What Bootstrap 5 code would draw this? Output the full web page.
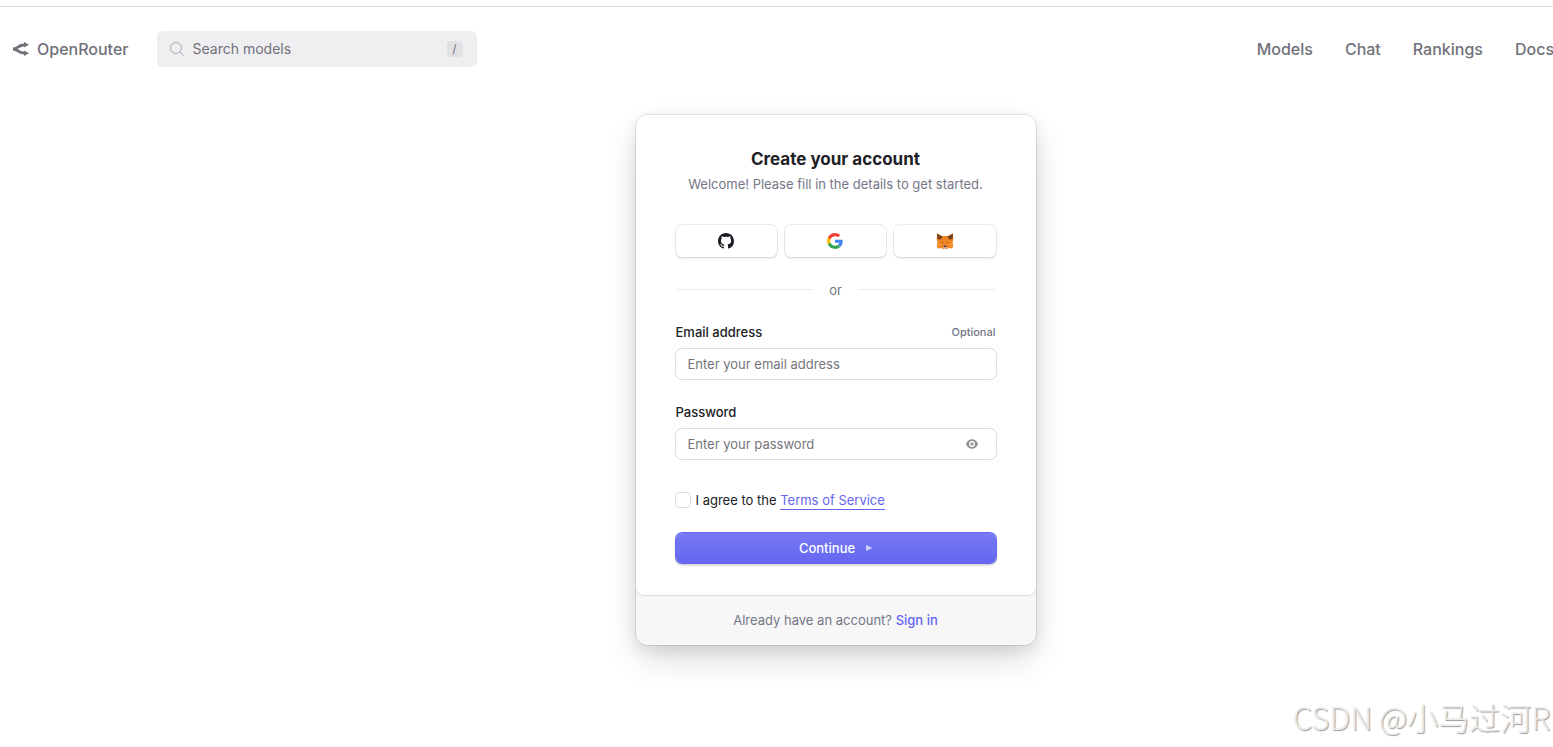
<!DOCTYPE html>
<html lang="en">
<head>
<meta charset="utf-8">
<meta name="viewport" content="width=device-width, initial-scale=1">
<title>OpenRouter - Create your account</title>
<link href="https://cdn.jsdelivr.net/npm/bootstrap@5.3.0/dist/css/bootstrap.min.css" rel="stylesheet">
<style>
  body { font-family: Inter, "Noto Sans CJK SC", sans-serif; background: #fff; color: #212126; font-size: 13px; line-height: 18px; }
  .page { min-height: 100vh; overflow: hidden; padding-top: 6px; }
  .site-header { border-top: 1px solid #dfdfe3; height: 85px; padding-left: 12px; }
  .brand, .site-nav a { color: #71717a; font-size: 16px; line-height: 24px; font-weight: 500; text-decoration: none; }
  .brand { gap: 7px; }
  .site-nav { gap: 32px; margin-right: -1px; }
  .search { width: 320px; height: 36px; margin-left: 28px; padding: 0 14px 0 12px; gap: 8px; background: #efeff1; border-radius: 6px; }
  .search input { min-width: 0; font-size: 14px; line-height: 20px; color: #71717a; outline: 0; }
  .search input::placeholder { color: #71717a; opacity: 1; }
  .search kbd { width: 16px; height: 16px; padding: 0; border-radius: 4px; background: #e2e2e5; color: #71717a; font: 12px/16px Inter, sans-serif; text-align: center; }
  .content { padding: 24px 0 40px 118px; }
  .signup { width: 400px; border-radius: 12px; background: #f7f7f7; box-shadow: 0 0 0 1px rgba(0,0,0,.09), 0 5px 15px rgba(0,0,0,.08), 0 15px 35px -5px rgba(25,28,33,.2); }
  .signup-body { padding: 32px 40px; background: #fff; border-radius: 12px 12px 8px 8px; box-shadow: 0 1px 1px rgba(0,0,0,.12); }
  .signup h1 { font-size: 17px; line-height: 24px; font-weight: 700; margin-bottom: 4px; }
  .muted { color: #747686; }
  .providers { display: grid; grid-template-columns: repeat(3, 1fr); gap: 8px; margin: 32px 0 24px; }
  .provider { height: 32px; border: 0; border-radius: 6px; background: #fff; box-shadow: 0 0 0 1px rgba(0,0,0,.08), 0 2px 2px rgba(0,0,0,.08); }
  .divider { gap: 16px; margin-bottom: 24px; }
  .divider hr { height: 1px; border: 0; background: #ebebed; opacity: 1; margin: 0 0 2px; }
  .field { margin-bottom: 24px; }
  .field label { font-weight: 500; }
  .field-box { height: 30px; margin-top: 8px; padding: 0 12px; border-radius: 6px; box-shadow: 0 0 0 1px #dedede; }
  .field-box input { min-width: 0; font-size: 13px; outline: 0; }
  .field-box input::placeholder { color: #75757c; opacity: 1; }
  .optional { font-size: 11px; font-weight: 500; }
  .reveal { width: 24px; height: 24px; }
  .terms { margin: 32px 0 24px; gap: 5px; }
  .terms input { appearance: none; width: 16px; height: 16px; margin: 0 0 0 -1px; border: 1px solid #dcdcde; border-radius: 4px; background: #fff; }
  .terms input:checked { background: #6466f1; }
  .accent { color: #6466f1; text-decoration: none; }
  .terms .accent { border-bottom: 1px solid #6466f1; padding-bottom: 1px; }
  .continue { height: 30px; border: 0; border-radius: 6px; color: #fff; font-weight: 500; background: linear-gradient(#7779f4, #6466f1); box-shadow: 0 0 0 1px #6668f2, 0 2px 3px rgba(0,0,0,.25); gap: 11px; }
  .signup-foot { padding: 16px; }
  .watermark { right: 3px; bottom: 8px; font-family: "Noto Sans CJK SC", sans-serif; font-size: 31px; line-height: 44px; font-weight: 300; color: #ececec; text-shadow: 1px 1px 1px #999; pointer-events: none; }
</style>
</head>
<body>
<div class="page position-relative">
  <header class="site-header d-flex align-items-center">
    <a class="brand d-flex align-items-center" href="#">
      <svg width="18" height="18" viewBox="0 0 18 18" fill="none" stroke="#71717a" stroke-width="3" aria-hidden="true">
        <path d="M1 9c5 0 5-4 11-4h1M1 9c5 0 5 4 11 4h1"/>
        <path d="M12 2l5 2.800-5 2.800zM12 10.400l5 2.800-5 2.800z" fill="#71717a" stroke="none"/>
      </svg>
      <span>OpenRouter</span>
    </a>
    <label class="search d-flex align-items-center">
      <svg width="16" height="16" viewBox="0 0 16 16" fill="none" stroke="#a9a9b0" stroke-linecap="round" aria-hidden="true"><circle cx="7" cy="7" r="5.500"/><path d="M11 11l3.500 3.500"/></svg>
      <input class="flex-grow-1 border-0 bg-transparent p-0" type="search" placeholder="Search models" aria-label="Search models">
      <kbd>/</kbd>
    </label>
    <nav class="site-nav d-flex ms-auto">
      <a href="#">Models</a><a href="#">Chat</a><a href="#">Rankings</a><a href="#">Docs</a>
    </nav>
  </header>

  <main class="content d-flex justify-content-center">
    <section class="signup">
      <form class="signup-body">
        <div class="text-center">
          <h1>Create your account</h1>
          <p class="muted m-0">Welcome! Please fill in the details to get started.</p>
        </div>
        <div class="providers">
          <button class="provider d-flex align-items-center justify-content-center" type="button" aria-label="GitHub">
            <svg width="16" height="16" viewBox="0 0 16 16" fill="#191c24"><path d="M8 0C3.580 0 0 3.580 0 8c0 3.540 2.290 6.530 5.470 7.590.4.070.55-.17.55-.38 0-.19-.01-.82-.01-1.490-2.010.37-2.530-.49-2.690-.94-.09-.23-.48-.94-.82-1.130-.28-.15-.68-.52-.01-.53.63-.01 1.080.58 1.230.82.72 1.210 1.870.87 2.330.66.07-.52.28-.87.51-1.070-1.780-.2-3.640-.89-3.640-3.950 0-.87.31-1.590.82-2.150-.08-.2-.36-1.020.08-2.120 0 0 .67-.21 2.200.82.64-.18 1.320-.27 2-.27s1.360.09 2 .27c1.530-1.040 2.200-.82 2.200-.82.44 1.100.16 1.920.08 2.120.51.56.82 1.270.82 2.150 0 3.070-1.870 3.750-3.650 3.950.29.25.54.73.54 1.480 0 1.070-.01 1.930-.01 2.200 0 .21.15.46.55.38A8.010 8.010 0 0 0 16 8c0-4.420-3.580-8-8-8z"/></svg>
          </button>
          <button class="provider d-flex align-items-center justify-content-center" type="button" aria-label="Google">
            <svg width="16" height="16" viewBox="0 0 48 48"><path fill="#ea4335" d="M24 9.500c3.540 0 6.710 1.220 9.210 3.600l6.850-6.850C35.900 2.380 30.470 0 24 0 14.620 0 6.510 5.380 2.560 13.220l7.980 6.190C12.430 13.720 17.740 9.500 24 9.500z"/><path fill="#4285f4" d="M46.980 24.550c0-1.570-.15-3.090-.38-4.550H24v9.020h12.940c-.58 2.960-2.260 5.480-4.780 7.180l7.730 6c4.510-4.180 7.090-10.360 7.090-17.650z"/><path fill="#fbbc05" d="M10.530 28.590c-.48-1.450-.76-2.990-.76-4.590s.27-3.140.76-4.590l-7.980-6.190C.92 16.460 0 20.120 0 24s.92 7.540 2.560 10.780z"/><path fill="#34a853" d="M24 48c6.480 0 11.930-2.130 15.890-5.810l-7.730-6c-2.150 1.450-4.920 2.300-8.160 2.300-6.260 0-11.570-4.220-13.470-9.910l-7.980 6.190C6.510 42.620 14.620 48 24 48z"/></svg>
          </button>
          <button class="provider d-flex align-items-center justify-content-center" type="button" aria-label="MetaMask">
            <svg width="18" height="16" viewBox="0 0 18 16"><path fill="#f08522" d="M1 .5l5 2.500h6l5-2.500.3 6-.8 3 .7 3.500-1 2.500-3-.5-2 1H6.800l-2-1-3 .5-1-2.500.7-3.500-.8-3z"/><path fill="#763e1a" d="M1 .5l5.500 3.300-1.500 2.700-3.500-.5zM17 .5l-5.500 3.300 1.500 2.700 3.500-.5z"/><path fill="#f6902f" d="M1 10l4-.5 1 3.500-4 1zM17 10l-4-.5-1 3.500 4 1z"/><path fill="#5c4a3c" d="M5 9l1.800.2-.2 1zM13 9l-1.800.2.200 1z"/><path fill="#233447" d="M7.800 12.800h2.400l.2 1.500H7.600z"/><path fill="#d7c1b3" d="M6.500 14.300h5l-1 1.500h-3z"/></svg>
          </button>
        </div>
        <div class="divider d-flex align-items-center muted"><hr class="flex-grow-1"><span>or</span><hr class="flex-grow-1"></div>
        <div class="field">
          <div class="d-flex justify-content-between"><label for="email">Email address</label><span class="optional muted">Optional</span></div>
          <div class="field-box d-flex align-items-center"><input class="flex-grow-1 border-0 bg-transparent p-0" id="email" type="email" placeholder="Enter your email address"></div>
        </div>
        <div class="field">
          <label class="d-block" for="password">Password</label>
          <div class="field-box d-flex align-items-center">
            <input class="flex-grow-1 border-0 bg-transparent p-0" id="password" type="password" placeholder="Enter your password">
            <button class="reveal d-flex align-items-center justify-content-center border-0 bg-transparent p-0" type="button" aria-label="Show password">
              <svg width="12" height="10" viewBox="0 0 12 10"><path fill="#929294" fill-rule="evenodd" d="M0 5C1 2 3.300.3 6 .3S11 2 12 5C11 8 8.700 9.700 6 9.700S1 8 0 5zm6-2.900a2.900 2.900 0 1 0 0 5.800 2.900 2.900 0 0 0 0-5.800z"/><circle cx="6" cy="5" r="1.600" fill="#929294"/></svg>
            </button>
          </div>
        </div>
        <div class="terms d-flex align-items-center">
          <input id="agree" type="checkbox">
          <label for="agree">I agree to the <a class="accent" href="#">Terms of Service</a></label>
        </div>
        <button class="continue w-100 d-flex align-items-center justify-content-center" type="submit">Continue
          <svg width="6" height="6" viewBox="0 0 6 6" aria-hidden="true"><path fill="#fff" fill-opacity=".65" d="M0 .5v5c0 .4.400.5.700.3L5.500 3.400c.3-.2.300-.6 0-.8L.7.2C.4 0 0 .1 0 .5z"/></svg>
        </button>
      </form>
      <div class="signup-foot text-center muted">Already have an account? <a class="accent fw-medium" href="#">Sign in</a></div>
    </section>
  </main>
  <div class="watermark position-absolute">CSDN @小马过河R</div>
</div>
<script src="https://cdn.jsdelivr.net/npm/bootstrap@5.3.0/dist/js/bootstrap.bundle.min.js"></script>
</body>
</html>
